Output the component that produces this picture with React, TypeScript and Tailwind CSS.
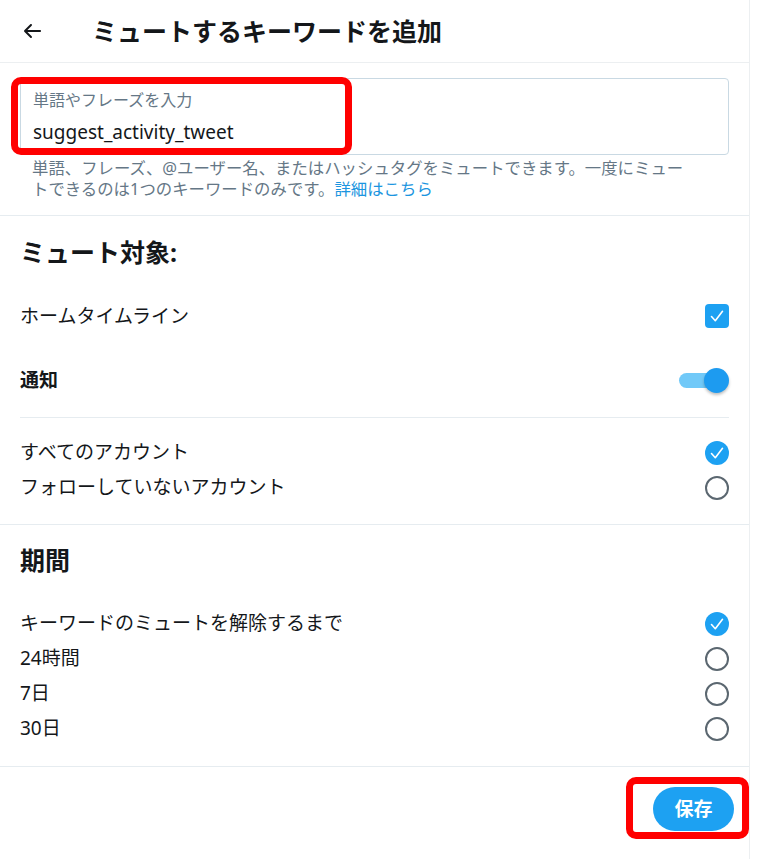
import React from 'react';

const FONT = '"Noto Sans", "Noto Sans CJK JP", sans-serif';

function CheckMark() {
    return (
        <svg viewBox="0 0 24 24" className="w-[24px] h-[24px]" fill="none">
            <path
                d="M6.5 12.5l3.8 4.2 7.2-9.4"
                stroke="white"
                strokeWidth={1.6}
                strokeLinecap="round"
                strokeLinejoin="round"
            />
        </svg>
    );
}

function Checkbox() {
    return (
        <div className="w-[24px] h-[24px] rounded-[4px] bg-[#1da1f2] flex items-center justify-center">
            <CheckMark />
        </div>
    );
}

function Radio({ checked }: { checked: boolean }) {
    if (checked) {
        return (
            <div className="w-[24px] h-[24px] rounded-full bg-[#1da1f2] flex items-center justify-center">
                <CheckMark />
            </div>
        );
    }
    return <div className="w-[24px] h-[24px] rounded-full border-2 border-[#5b6770]" />;
}

function Toggle() {
    return (
        <div className="relative w-[50px] h-[25px] flex items-center">
            <div className="w-[46px] h-[15px] rounded-full bg-[#71c9f8]" />
            {/* knob */}
            <div className="absolute right-0 top-0 w-[25px] h-[25px] rounded-full bg-[#1d9bf0] shadow-[0_2px_3px_rgba(0,0,0,0.25)]" />
        </div>
    );
}

export default function App() {
    const duration = ['キーワードのミュートを解除するまで', '24時間', '7日', '30日'];

    return (
        <div className="w-[762px] h-[859px] bg-white text-[#14171a]" style={{ fontFamily: FONT }}>
            <div className="w-[750px] h-[859px] border-r border-[#eceff1]">
                {/* Header */}
                <div className="h-[63px] flex items-center pl-5 border-b border-[#eceff1]">
                    <svg viewBox="0 0 24 24" className="w-[24px] h-[24px] fill-[#14171a]">
                        <path d="M20 11H7.414l4.293-4.293c.39-.39.39-1.023 0-1.414s-1.023-.39-1.414 0l-6 6c-.39.39-.39 1.023 0 1.414l6 6c.195.195.45.293.707.293s.512-.098.707-.293c.39-.39.39-1.023 0-1.414L7.414 13H20c.553 0 1-.447 1-1s-.447-1-1-1z" />
                    </svg>
                    <h1 className="ml-12 text-[25px] leading-[30px] font-bold">ミュートするキーワードを追加</h1>
                </div>

                {/* Keyword input */}
                <div className="px-5 pt-[15px] pb-[16px] border-b border-[#e6ecf0]">
                    <div className="relative">
                        <div className="h-[77px] border border-[#c9d9e3] rounded-[4px] pl-3 pt-[11px]">
                            <div className="text-[16px] leading-[20px] text-[#657786]">単語やフレーズを入力</div>
                            <div className="mt-[10px] text-[19px] leading-[24px]">suggest_activity_tweet</div>
                        </div>
                        {/* highlight */}
                        <div className="absolute -left-[9px] -top-[1px] w-[341px] h-[78px] border-[7px] border-[#ff0000] rounded-[10px]" />
                    </div>
                    <p className="pl-3 mt-[2px] text-[16.4px] leading-[21px] text-[#657786]">
                        単語、フレーズ、@ユーザー名、またはハッシュタグをミュートできます。一度にミュー
                        <br />
                        トできるのは1つのキーワードのみです。<span className="text-[#1b95e0]">詳細はこちら</span>
                    </p>
                </div>

                {/* Mute target */}
                <div className="px-5 pt-[21px] pb-[19px] border-b border-[#e6ecf0]">
                    <h2 className="text-[25px] leading-[30px] font-bold">ミュート対象:</h2>
                    <div className="mt-[25px] h-[48px] flex items-center justify-between">
                        <span className="text-[19px]">ホームタイムライン</span>
                        <Checkbox />
                    </div>
                    <div className="mt-[16px] h-[48px] flex items-center justify-between">
                        <span className="text-[19px] font-bold">通知</span>
                        <Toggle />
                    </div>
                    <div className="mt-[13px] border-t border-[#e6ecf0]" />
                    <div className="mt-[17px] h-[35px] flex items-center justify-between">
                        <span className="text-[19px]">すべてのアカウント</span>
                        <Radio checked />
                    </div>
                    <div className="h-[35px] flex items-center justify-between">
                        <span className="text-[19px]">フォローしていないアカウント</span>
                        <Radio checked={false} />
                    </div>
                </div>

                {/* Duration */}
                <div className="px-5 pt-[20px] pb-[20px] border-b border-[#e6ecf0]">
                    <h2 className="text-[25px] leading-[30px] font-bold">期間</h2>
                    <div className="mt-[31px]">
                        {duration.map((label, i) => (
                            <div key={label} className="h-[35px] flex items-center justify-between">
                                <span className="text-[19px]">{label}</span>
                                <Radio checked={i === 0} />
                            </div>
                        ))}
                    </div>
                </div>

                {/* Footer */}
                <div className="flex justify-end pt-[20px] pr-[15px]">
                    <div className="relative">
                        <button className="w-[81px] h-[44px] rounded-full bg-[#1da1f2] text-white text-[19px] font-bold">
                            保存
                        </button>
                        <div className="absolute -left-[27px] -right-[15px] -top-[10px] -bottom-[8px] border-[7px] border-[#ff0000] rounded-[10px]" />
                    </div>
                </div>
            </div>
        </div>
    );
}
